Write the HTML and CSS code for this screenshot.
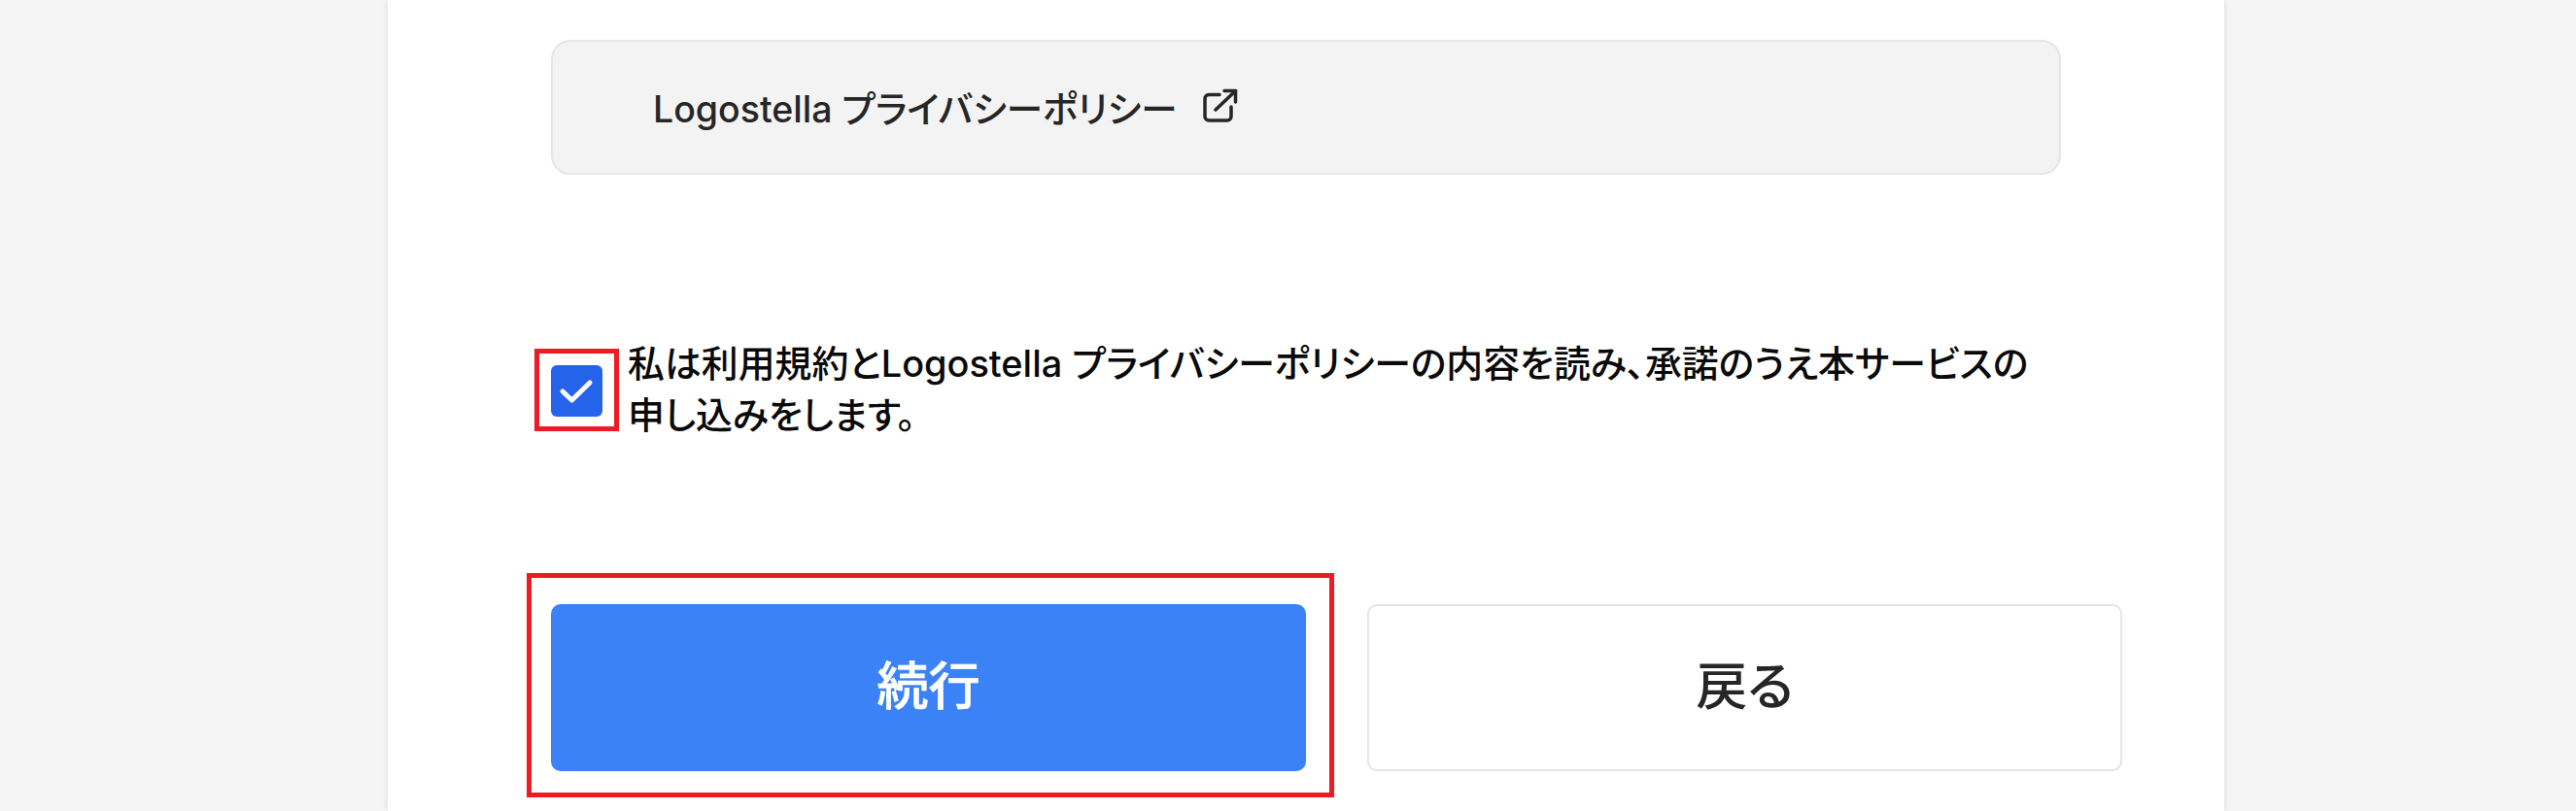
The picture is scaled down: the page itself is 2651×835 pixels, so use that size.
FILE: index.html
```html
<!DOCTYPE html>
<html lang="ja">
<head>
  <meta charset="UTF-8">
  <meta name="viewport" content="width=device-width, initial-scale=1.0">
  <title>Logostella 申し込み</title>
  <link rel="stylesheet" href="styles.css">
</head>
<body>

  <main class="panel">
    <a class="policy-card" href="#">
      <span>Logostella プライバシーポリシー</span>
      <svg class="external-icon" viewBox="0 0 36 36" fill="none" stroke="currentColor" stroke-width="3.5" stroke-linecap="round" stroke-linejoin="round">
        <path d="M17 6.500H6a4 4 0 0 0-4 4V29a4 4 0 0 0 4 4h19a4 4 0 0 0 4-4V19"/>
        <path d="M13 22L33.500 2.500"/>
        <path d="M22 2.500h11.500V14"/>
      </svg>
    </a>

    <label class="agree">
      <span class="checkbox">
        <svg viewBox="0 0 53 53" fill="none" stroke="#fff" stroke-width="5" stroke-linecap="round" stroke-linejoin="round">
          <path d="M12 27l9.500 9 18.500-18"/>
        </svg>
        <span class="mark"></span>
      </span>
      <span class="agree-text">私は利用規約とLogostella プライバシーポリシーの内容を読み、承諾のうえ本サービスの申し込みをします。</span>
    </label>

    <div class="actions">
      <button type="button" class="btn btn-primary">続行<span class="mark"></span></button>
      <button type="button" class="btn btn-back">戻る</button>
    </div>
  </main>

</body>
</html>
```

FILE: styles.css
```css
* {
  box-sizing: border-box;
}

html, body {
  height: 100%;
}

body {
  margin: 0;
  background: #f5f5f5;
  font-family: Inter, "Noto Sans CJK JP", sans-serif;
  font-feature-settings: "palt";
  overflow: hidden;
}

.panel {
  width: 1890px;
  height: 835px;
  margin-left: 399px;
  padding: 41px 0 0 168px;
  background: #fff;
  box-shadow: 0 0 6px rgba(0,0,0,0.12);
}

.policy-card {
  display: flex;
  align-items: center;
  width: 1554px;
  height: 139px;
  padding: 0 0 3px 103px;
  background: #f3f3f3;
  border: 2px solid #e5e5e5;
  border-radius: 20px;
  color: #262626;
  font-size: 37.500px;
  font-weight: 500;
  text-decoration: none;
}

.external-icon {
  width: 36px;
  height: 36px;
  margin-left: 27px;
}

.agree {
  display: flex;
  margin-top: 176px;
  width: 1530px;
  color: #0a0a0a;
  font-size: 37.900px;
  font-weight: 500;
  line-height: 53px;
}

.checkbox {
  position: relative;
  flex: none;
  width: 53px;
  height: 53px;
  margin: 20px 26px 0 0;
  background: #2563eb;
  border-radius: 6px;
}

.checkbox svg {
  display: block;
}

.agree-text {
  margin-top: -8px;
}

.actions {
  display: flex;
  gap: 63px;
  margin-top: 168px;
}

.btn {
  position: relative;
  width: 777px;
  height: 172px;
  padding-bottom: 12px;
  border-radius: 10px;
  font-family: inherit;
  font-feature-settings: inherit;
  font-size: 53px;
  font-weight: 500;
}

.btn-primary {
  background: #3b82f6;
  border: none;
  color: #fff;
  -webkit-text-stroke: 0.6px #fff;
}

.btn-back {
  background: #fff;
  border: 2px solid #e5e5e5;
  color: #262626;
}

/* red annotation frames */
.mark {
  position: absolute;
  border: 5px solid #ed1c24;
}

.checkbox .mark {
  top: -17px;
  right: -17px;
  bottom: -15px;
  left: -17px;
}

.btn .mark {
  top: -32px;
  right: -29px;
  bottom: -27px;
  left: -25px;
}
```
